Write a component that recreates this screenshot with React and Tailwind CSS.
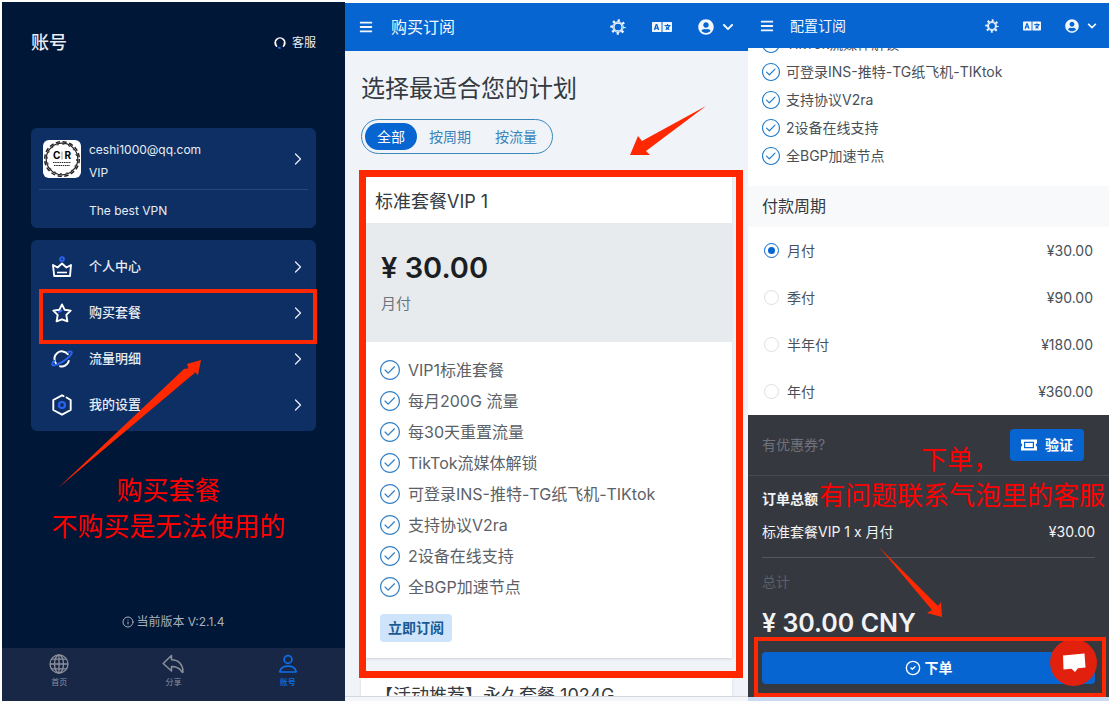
import React, { useState } from 'react';
import { FaBars, FaLanguage, FaUserCircle, FaChevronDown } from 'react-icons/fa';
import { SlCheck } from 'react-icons/sl';
import { ChevronRight, CircleCheck, Info } from 'lucide-react';

const HeadsetIcon = () => (
    <svg viewBox="0 0 12 12" className="w-3 h-3" fill="none" strokeWidth="1.6" strokeLinecap="round">
        <path d="M2.6 9.2A4.8 4.8 0 1 1 9.4 9.2" stroke="#fff" />
        <path d="M1.6 5.8v2M10.4 5.8v2" stroke="#fff" />
        <path d="M4.800 10.800l1.2.2" stroke="#2f7bff" />
    </svg>
);

const SunIcon = ({ className }) => (
    <svg viewBox="0 0 16 16" className={className} fill="none" stroke="currentColor">
        <circle cx="8" cy="8" r="4" strokeWidth="1.3" />
        <circle cx="8" cy="8" r="6.300" strokeWidth="2.800" strokeDasharray="2.100 2.848" strokeDashoffset="1.050" />
        <circle cx="8" cy="8" r="5.300" strokeWidth="0.900" />
    </svg>
);

const CrownIcon = () => (
    <svg viewBox="0 0 20 22" className="w-5 h-[22px]" fill="none" strokeWidth="1.9" strokeLinejoin="round">
        <circle cx="10" cy="3" r="1.9" stroke="#2b63f0" strokeWidth="1.9" />
        <path d="M1 9l4.600 2.500L10 7.500l4.400 4L19 9l-1 11H2.200z" stroke="#fff" />
        <path d="M5 16.500h10" stroke="#fff" strokeWidth="1.600" />
    </svg>
);

const StarIcon = () => (
    <svg viewBox="0 0 20 20" className="w-5 h-5" fill="none" strokeWidth="1.9" strokeLinejoin="round">
        <path d="M6 9c1.700 0 3-.7 3.800-2.200" stroke="#2b63f0" strokeWidth="2.200" />
        <path d="M10 1.400l2.700 5.400 6 .8-4.400 4.300 1.100 6.400-5.400-2-5.400 2 1.100-6.400L1.300 7.600l6-.8z" stroke="#fff" />
    </svg>
);

const PlanetIcon = () => (
    <svg viewBox="0 0 22 20" className="w-[22px] h-5" fill="none" strokeWidth="2" strokeLinecap="round">
        <path d="M16.800 5.200A7.400 7.400 0 1 0 5 14.500M9 17.200a7.400 7.400 0 0 0 8.800-5.200" stroke="#fff" />
        <path d="M16.800 3.100c2.600-1 4.200-.7 4 .8-.5 2.600-5 6.200-9.500 9-4.500 2.600-9 4.200-10 2.900-.4-.8.300-2.300 1.900-4" stroke="#2b63f0" />
    </svg>
);

const HexIcon = () => (
    <svg viewBox="0 0 20 22" className="w-5 h-[22px]" fill="none" strokeWidth="1.9" strokeLinejoin="round" strokeLinecap="round">
        <path d="M14.500 3.500L18.700 6v10L10 20.700 1.300 16V6L10 1.300l1.600.8" stroke="#fff" />
        <circle cx="10" cy="11" r="3" stroke="#2b63f0" strokeWidth="2.200" />
    </svg>
);

const GlobeIcon = () => (
    <svg viewBox="0 0 20 20" className="w-5 h-5" fill="none" stroke="currentColor" strokeWidth="1.3">
        <circle cx="10" cy="10" r="9" />
        <ellipse cx="10" cy="10" rx="4.500" ry="9" />
        <path d="M10 1v18M1 10h18M2.600 5.200h14.800M2.600 14.800h14.800" />
    </svg>
);

const ShareIcon = () => (
    <svg viewBox="0 0 22 20" className="w-[22px] h-5" fill="none" stroke="currentColor" strokeWidth="1.5" strokeLinejoin="round">
        <path d="M9.500 1.500L1.200 9.500l8.300 7.500v-4.500c4.500 0 7.500 1.200 9.500 4.200q1.200 1.600 1.800 1.700C21.500 10.500 16.500 6 9.500 5.800z" />
    </svg>
);

const PersonIcon = () => (
    <svg viewBox="0 0 20 20" className="w-5 h-5" fill="none" stroke="currentColor" strokeWidth="1.7" strokeLinejoin="round">
        <circle cx="10" cy="5.500" r="3.900" />
        <path d="M2.400 18c-.5 0-.6-.4-.5-.8 1-3.300 4-5 8.100-5s7.100 1.700 8.100 5c.1.400 0 .8-.5.8z" />
    </svg>
);

const TicketIcon = () => (
    <svg viewBox="0 0 16 12" className="w-4 h-3">
        <path fillRule="evenodd" fill="#fff" d="M0 .5h16v3.800a1.800 1.800 0 0 0 0 3.400v3.800H0V7.700a1.800 1.800 0 0 0 0-3.400zm3 2.200v6.600h10V2.700z" />
        <path fill="#fff" d="M4.200 4h7.600v4H4.200z" />
    </svg>
);

const Avatar = () => (
    <div className="relative flex h-[38px] w-[38px] flex-col items-center justify-center rounded-md bg-white leading-none text-black">
        <svg viewBox="0 0 38 38" className="absolute inset-0 h-full w-full" fill="none" stroke="#222">
            <circle cx="19" cy="19" r="15.800" strokeWidth="1.200" />
            <circle cx="19" cy="19" r="17.300" strokeWidth="1.500" strokeDasharray="4.300 2.494" />
            <circle cx="19" cy="19" r="14.800" strokeWidth="1" strokeDasharray="2 3.812" />
            <path d="M19 11.500v8" stroke="#999" strokeWidth="1" />
            <path d="M10 22.500h18M11 25.500h16" strokeWidth="1.200" strokeDasharray="1.500 .7" />
        </svg>
        <div className="mb-2 flex gap-1 text-[10px] font-bold"><span>C</span><span>R</span></div>
    </div>
);

const menu = [
    { label: '个人中心', icon: CrownIcon },
    { label: '购买套餐', icon: StarIcon, marked: true },
    { label: '流量明细', icon: PlanetIcon },
    { label: '我的设置', icon: HexIcon },
];

const features = [
    'VIP1标准套餐',
    '每月200G 流量',
    '每30天重置流量',
    'TikTok流媒体解锁',
    '可登录INS-推特-TG纸飞机-TIKtok',
    '支持协议V2ra',
    '2设备在线支持',
    '全BGP加速节点',
];

const periods = [
    { label: '月付', price: '¥30.00' },
    { label: '季付', price: '¥90.00' },
    { label: '半年付', price: '¥180.00' },
    { label: '年付', price: '¥360.00' },
];

const AccountPanel = () => (
    <section className="relative flex flex-col overflow-hidden bg-[#001737] text-[#e8edf5]">
        <header className="flex items-center justify-between px-[29px] pt-7">
            <h1 className="text-lg leading-[26px] font-medium">账号</h1>
            <a href="#service" className="flex items-center gap-1.5 text-xs"><HeadsetIcon />客服</a>
        </header>

        <div className="mx-[29px] mt-[72px] rounded-md bg-[#0e2f63] px-2">
            <a href="#profile" className="flex h-[62px] items-center border-b border-[#24477f] pl-1">
                <Avatar />
                <div className="ml-2 flex-1 pt-1 text-xs leading-[23px]">
                    <p>ceshi1000@qq.com</p>
                    <p>VIP</p>
                </div>
                <ChevronRight className="w-5 h-5" strokeWidth={1.5} />
            </a>
            <p className="h-[38px] pl-[50px] text-xs leading-[41px]">The best VPN</p>
        </div>

        <nav className="mx-[29px] mt-3 rounded-md bg-[#0e2f63] pt-1 pb-[3px]">
            {menu.map(({ label, icon: Icon, marked }) => (
                <a key={label} href="#menu" className="relative flex h-[46px] items-center pr-2 pl-5 text-[13px] font-medium">
                    <span className="flex w-[22px] justify-center"><Icon /></span>
                    <span className="ml-4 flex-1">{label}</span>
                    <ChevronRight className="w-5 h-5" strokeWidth={1.5} />
                    {marked && <span className="absolute -top-px -right-px -bottom-2 left-2 border-4 border-[#ff2800]" />}
                </a>
            ))}
        </nav>

        <p className="mt-auto mb-3.5 flex items-center justify-center gap-0.5 text-xs leading-6 text-[#a9b0bc]">
            <Info className="w-3 h-3" />当前版本 V:2.1.4
        </p>
        <nav className="grid h-[53px] shrink-0 grid-cols-3 bg-[#182746] text-[8px] leading-3 text-[#8b909a]">
            <a href="#home" className="flex flex-col items-center gap-0.5 pt-1.5"><GlobeIcon />首页</a>
            <a href="#share" className="flex flex-col items-center gap-0.5 pt-1.5"><ShareIcon />分享</a>
            <a href="#account" className="flex flex-col items-center gap-0.5 pt-1.5 font-medium text-[#0f6fe8]"><PersonIcon />账号</a>
        </nav>

        <svg viewBox="0 0 143 129" className="absolute top-[357px] left-14 w-[143px]">
            <path d="M0 129L132 14l-3-9 14-4-3 15-4-3.500z" fill="#ff2800" />
            <path d="M0 129L126 10l6-1 5 5-4 3z" fill="#ff2800" />
        </svg>
        <p className="absolute inset-x-0 top-[471px] pr-2.5 text-center text-[26px] leading-9 text-[#ff0000]">
            购买套餐<br />不购买是无法使用的
        </p>
    </section>
);

const TopBar = ({ title, compact }) => (
    <header className={`relative z-10 flex shrink-0 items-center bg-[#0665d0] text-[#f2f7fd] ${compact ? 'h-[45px] gap-4 px-3 text-sm' : 'h-12 gap-[18px] px-3.5 text-base'}`}>
        <button aria-label="菜单"><FaBars className="w-3.5 h-3.5" /></button>
        <h2 className="flex-1">{title}</h2>
        <button aria-label="主题"><SunIcon className={compact ? 'w-3.5 h-3.5' : 'w-4 h-4'} /></button>
        <button aria-label="语言" className="mx-2"><FaLanguage className={compact ? 'w-[18px] h-[18px]' : 'w-5 h-5'} /></button>
        <button aria-label="用户" className="flex items-center gap-2">
            <FaUserCircle className={compact ? 'w-3.5 h-3.5' : 'w-4 h-4'} />
            <FaChevronDown className={compact ? 'w-2.5 h-2.5' : 'w-3 h-3'} />
        </button>
    </header>
);

const PlansPanel = () => {
    const [tab, setTab] = useState('全部');

    return (
        <section className="relative mt-px flex flex-col overflow-hidden bg-[#f0f3f8]">
            <TopBar title="购买订阅" />
            <div className="min-h-0 flex-1 overflow-hidden px-4 pt-5 text-[#343a40]">
                <h1 className="text-2xl leading-9">选择最适合您的计划</h1>
                <div className="mt-3 inline-flex rounded-full border border-[#3b87bd] p-[3px] text-sm leading-[27px]">
                    {['全部', '按周期', '按流量'].map(t => (
                        <button
                            key={t}
                            onClick={() => setTab(t)}
                            className={`rounded-full px-3 ${tab === t ? 'bg-[#0665d0] text-white' : 'text-[#3a83b8]'}`}
                        >
                            {t}
                        </button>
                    ))}
                </div>

                <article className="mt-5 bg-white shadow-sm">
                    <h3 className="px-3.5 pt-2.5 pb-[3px] text-lg leading-9">标准套餐VIP 1</h3>
                    <div className="h-[119px] bg-[#e8ebee] px-5 pt-6">
                        <p className="text-[29px] leading-[42px] font-semibold text-[#1b1e22]">¥ 30.00</p>
                        <p className="text-[15px] leading-[30px] text-[#6c757d]">月付</p>
                    </div>
                    <ul className="px-[19px] pt-3 text-base text-[#5b6167]">
                        {features.map(f => (
                            <li key={f} className="flex h-[31px] items-center gap-2">
                                <SlCheck className="w-5 h-5 text-[#3580c4]" />{f}
                            </li>
                        ))}
                    </ul>
                    <div className="px-[19px] pt-3 pb-4">
                        <button className="rounded-sm bg-[#cde4fb] px-2 text-sm leading-7 font-bold text-[#1a5a94]">立即订阅</button>
                    </div>
                </article>

                <article className="mt-5 bg-white shadow-sm">
                    <h3 className="px-3.5 text-lg leading-9">【活动推荐】永久套餐 1024G</h3>
                </article>
            </div>
            <footer className="h-[5px] shrink-0 border-t border-[#d5d8dc] bg-[#f4f6f9]" />

            <div className="pointer-events-none absolute top-[167px] right-[5px] bottom-[23px] left-3.5 border-[7px] border-[#ff2800]" />
            <svg viewBox="0 0 76 50" className="absolute top-[103px] right-[42px] w-[76px]">
                <path d="M76 0L16 45l4 4H0L8 30l4 5z" fill="#ff2800" />
            </svg>
        </section>
    );
};

const CheckoutPanel = () => {
    const [period, setPeriod] = useState('月付');

    return (
        <section className="relative mt-px flex flex-col overflow-hidden bg-white text-sm text-[#495057]">
            <TopBar title="配置订阅" compact />
            <ul className="-mt-[18px] px-3.5">
                {features.slice(3).map(f => (
                    <li key={f} className="flex h-7 items-center gap-1.5">
                        <SlCheck className="w-[18px] h-[18px] text-[#1f7acb]" />{f}
                    </li>
                ))}
            </ul>
            <h3 className="mt-4 bg-[#f8f9fb] px-3.5 text-base leading-[41px] text-[#343a40]">付款周期</h3>
            <div className="px-4">
                {periods.map(p => (
                    <label key={p.label} className="flex h-[47px] items-center">
                        <input
                            type="radio"
                            name="period"
                            checked={period === p.label}
                            onChange={() => setPeriod(p.label)}
                            className="mr-2 grid h-[15px] w-[15px] appearance-none place-content-center rounded-full border border-[#dcdfe3] checked:border-[#0665d0] checked:before:h-[7px] checked:before:w-[7px] checked:before:rounded-full checked:before:bg-[#0665d0]"
                        />
                        <span className="flex-1">{p.label}</span>
                        <span>{p.price}</span>
                    </label>
                ))}
            </div>

            <div className="flex flex-1 flex-col bg-[#363840] text-[#f1f3f5]">
                <div className="flex h-[61px] shrink-0 items-center border-b border-[#484b53] pr-[25px] pl-3.5">
                    <input aria-label="优惠券" placeholder="有优惠券?" className="min-w-0 flex-1 bg-transparent outline-none placeholder:text-[#6f727a]" />
                    <button className="flex h-8 items-center gap-2 rounded-sm bg-[#0665d0] px-[11px] font-bold text-white"><TicketIcon />验证</button>
                </div>
                <div className="px-3.5">
                    <h3 className="pt-[7px] leading-8 font-bold">订单总额</h3>
                    <div className="flex justify-between border-b border-[#54575f] pb-2 leading-[34px]">
                        <span>标准套餐VIP 1 x 月付</span>
                        <span>¥30.00</span>
                    </div>
                    <p className="pt-2 leading-8 text-[#5d6068]">总计</p>
                    <p className="pt-1 text-[25px] leading-[42px] font-semibold">¥ 30.00 CNY</p>
                    <button className="mt-2 flex h-8 w-full items-center justify-center gap-1 rounded-sm bg-[#0665d0] font-bold text-white">
                        <CircleCheck className="w-4 h-4" />下单
                    </button>
                </div>
            </div>
            <footer className="h-1 shrink-0 bg-[#c9d9f0]" />

            <button aria-label="联系客服" className="absolute right-3 bottom-[15px] flex h-[47px] w-[47px] items-center justify-center rounded-full bg-[#e2200e]">
                <svg viewBox="0 0 24 20" className="w-6 h-5"><path d="M1 2.500L22.500.500 23.500 14.500 16 15.200 13 19 9.500 15.800 1.500 16.500z" fill="#fff" /></svg>
            </button>
            <div className="pointer-events-none absolute right-[3px] bottom-1 left-1.5 h-[60px] border-4 border-[#ff2800]" />
            <svg viewBox="0 0 64 70" className="absolute top-[544px] left-[131px] w-16">
                <path d="M0 0L59 59l3-4 1 15-15-4 5-3z" fill="#ff2800" />
            </svg>
            <p className="pointer-events-none absolute top-[439px] right-0 w-[290px] text-[26px] leading-9 whitespace-nowrap text-[#ff0000]">
                <span className="block pr-2 text-center">下单，</span>
                有问题联系气泡里的客服
            </p>
        </section>
    );
};

const App = () => (
    <main className="grid h-screen grid-cols-[343fr_403fr_361fr] overflow-hidden bg-white pt-0.5 pl-0.5 font-['Inter','Noto_Sans_CJK_SC',sans-serif]">
        <AccountPanel />
        <PlansPanel />
        <CheckoutPanel />
    </main>
);

export default App;
